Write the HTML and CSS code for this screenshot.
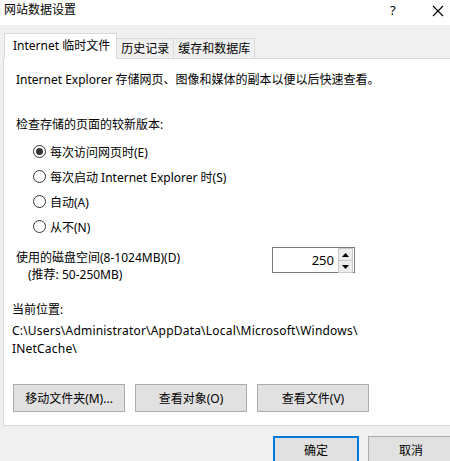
FILE: index.html
```html
<!DOCTYPE html>
<html lang="zh-CN">
<head>
<meta charset="utf-8">
<title>网站数据设置</title>
<link rel="stylesheet" href="styles.css">
</head>
<body>
<div class="window">
  <div class="titlebar">
    <span class="title">网站数据设置</span>
    <span class="help">?</span>
    <span class="close"><svg width="12" height="12" viewBox="0 0 12 12"><path d="M1 1L11 11M11 1L1 11" stroke="#000" stroke-width="1.1" fill="none"/></svg></span>
  </div>
  <div class="tabs">
    <div class="tab active">Internet 临时文件</div>
    <div class="tab">历史记录</div>
    <div class="tab">缓存和数据库</div>
  </div>
  <div class="panel">
    <p class="desc">Internet Explorer 存储网页、图像和媒体的副本以便以后快速查看。</p>
    <p class="heading">检查存储的页面的较新版本:</p>
    <div class="radios">
      <div class="radio-row"><span class="radio checked"></span><span>每次访问网页时(E)</span></div>
      <div class="radio-row"><span class="radio"></span><span>每次启动 Internet Explorer 时(S)</span></div>
      <div class="radio-row"><span class="radio"></span><span>自动(A)</span></div>
      <div class="radio-row"><span class="radio"></span><span>从不(N)</span></div>
    </div>
    <div class="disk">
      <div class="disk-label">
        <div>使用的磁盘空间(8-1024MB)(D)</div>
        <div class="rec">(推荐: 50-250MB)</div>
      </div>
      <div class="spinner">
        <span class="spin-value">250</span>
        <span class="spin-btns">
          <span class="spin-btn"><svg width="7" height="4" viewBox="0 0 7 4"><path d="M0 4L3.5 0L7 4Z" fill="#000"/></svg></span>
          <span class="spin-btn"><svg width="7" height="4" viewBox="0 0 7 4"><path d="M0 0L3.5 4L7 0Z" fill="#000"/></svg></span>
        </span>
      </div>
    </div>
    <p class="loc-label">当前位置:</p>
    <p class="path">C:\Users\Administrator\AppData\Local\Microsoft\Windows\<br>INetCache\</p>
    <div class="actions">
      <button class="btn">移动文件夹(M)...</button>
      <button class="btn">查看对象(O)</button>
      <button class="btn">查看文件(V)</button>
    </div>
  </div>
  <div class="footer">
    <button class="btn dlg primary">确定</button>
    <button class="btn dlg">取消</button>
  </div>
</div>
</body>
</html>
```

FILE: styles.css
```css
html, body {
  margin: 0;
  padding: 0;
}
body {
  width: 450px;
  height: 461px;
  overflow: hidden;
  background: #f0f0f0;
  font-family: "Noto Sans", "Noto Sans CJK SC", sans-serif;
  font-size: 12px;
  color: #000;
}
.window {
  width: 470px;
}
.titlebar {
  height: 25px;
  background: #fff;
  display: flex;
  align-items: flex-start;
  position: relative;
}
.title {
  margin-left: 4px;
  margin-top: 2px;
  line-height: 16px;
}
.help {
  position: absolute;
  left: 390px;
  top: 2px;
  font-size: 13px;
  line-height: 16px;
}
.close {
  position: absolute;
  left: 432px;
  top: 5px;
  line-height: 0;
}
.tabs {
  display: flex;
  align-items: flex-end;
  margin-top: 9px;
  padding-left: 4px;
  height: 24px;
  position: relative;
  z-index: 1;
}
.tab {
  height: 19px;
  line-height: 19px;
  border: 1px solid #d9d9d9;
  border-bottom: none;
  background: #f0f0f0;
  padding: 0 4px 0 4px;
  margin-left: -1px;
  white-space: nowrap;
}
.tab.active {
  height: 24px;
  line-height: 24px;
  background: #fff;
  margin-left: 0;
  padding: 0 6px 0 8px;
  border-bottom: 1px solid #fff;
  margin-bottom: -1px;
}
.panel {
  margin-left: 3px;
  height: 366px;
  background: #fff;
  border: 1px solid #d9d9d9;
  box-sizing: content-box;
}
.panel p {
  margin: 0;
  line-height: 16px;
}
.desc {
  padding: 13px 0 0 12px;
}
.heading {
  padding: 29px 0 0 12px;
}
.radios {
  padding: 6px 0 0 29px;
  display: flex;
  flex-direction: column;
}
.radio-row {
  display: flex;
  align-items: center;
  height: 25px;
  gap: 4px;
}
.radio {
  width: 11px;
  height: 11px;
  border: 1px solid #333;
  border-radius: 50%;
  display: inline-flex;
  align-items: center;
  justify-content: center;
  background: #fff;
}
.radio.checked::after {
  content: "";
  width: 7px;
  height: 7px;
  border-radius: 50%;
  background: #333;
}
.disk {
  display: flex;
  align-items: flex-start;
  padding: 10px 0 0 12px;
}
.disk-label {
  width: 256px;
  flex: none;
}
.disk-label div {
  line-height: 17px;
}
.disk-label .rec {
  padding-left: 12px;
}
.spinner {
  margin-top: -2px;
  width: 81px;
  height: 24px;
  border: 1px solid #7a7a7a;
  display: flex;
  align-items: center;
}
.spin-value {
  flex: 1;
  text-align: right;
  padding-right: 4px;
  font-size: 13px;
}
.spin-btns {
  display: flex;
  flex-direction: column;
  height: 24px;
  width: 15px;
  margin-right: 1px;
}
.spin-btn {
  flex: 1;
  display: flex;
  align-items: center;
  justify-content: center;
  background: #ececec;
  border: 1px solid #c9c9c9;
  margin-bottom: -1px;
}
.loc-label {
  padding: 19px 0 0 8px;
}
.path {
  padding: 4px 0 0 8px;
  line-height: 18px !important;
  letter-spacing: 0.2px;
}
.actions {
  display: flex;
  gap: 10px;
  padding: 26px 0 0 9px;
}
.btn {
  font-family: inherit;
  font-size: 12px;
  color: #000;
  width: 112px;
  height: 28px;
  background: #e1e1e1;
  border: 1px solid #adadad;
  padding: 0;
  margin: 0;
}
.footer {
  display: flex;
  gap: 9px;
  padding: 10px 0 0 273px;
}
.btn.dlg {
  width: 86px;
}
.btn.primary {
  border: 2px solid #0078d7;
}
```
